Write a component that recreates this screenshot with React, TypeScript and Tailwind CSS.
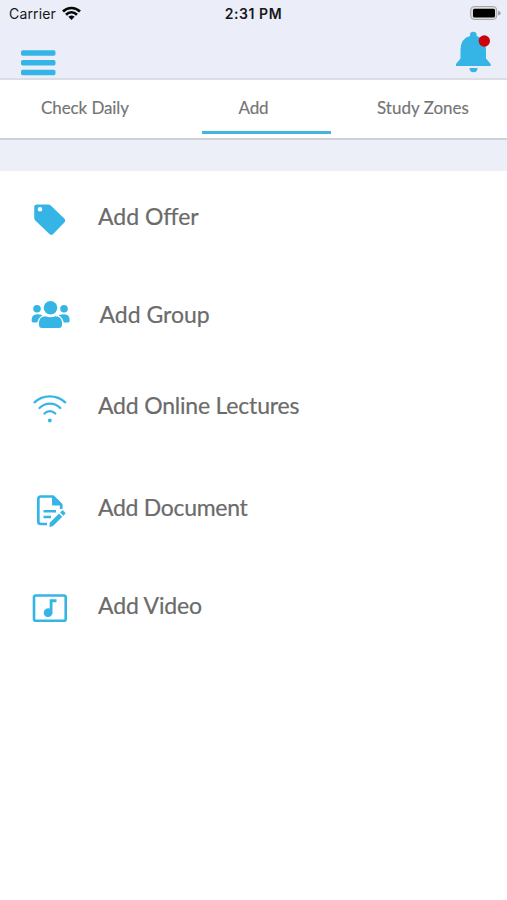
import type { ReactNode } from "react";

function Row({ icon, label, className, textClass }: { icon: ReactNode; label: string; className: string; textClass: string }) {
  return (
    <button className={`flex h-15 w-full items-center text-left text-[23px] leading-[30px] text-[#6b6b6b] ${className}`}>
      {icon}
      <span className={`whitespace-nowrap pb-[2px] [-webkit-text-stroke:0.2px_#6b6b6b] ${textClass}`}>{label}</span>
    </button>
  );
}

const iconClass = "h-15 w-[98px] shrink-0";

function TagIcon() {
  return (
    <svg className={iconClass} viewBox="0 187 98 60" fill="#35b5e5">
      <path fillRule="evenodd" d="M37 204.500H48Q49.700 204.500 51 205.700L64.300 218.500Q66.200 220.500 64.300 222.500L53.200 233.900Q51.300 235.700 49.400 233.900L35.300 220.500Q34.200 219.400 34.200 218V207.300Q34.200 204.500 37 204.500ZM40 207A2.300 2.300 0 1 0 40 211.600A2.300 2.300 0 1 0 40 207Z" />
    </svg>
  );
}

function GroupIcon() {
  return (
    <svg className={iconClass} viewBox="0 285 98 60" fill="#35b5e5">
      <circle cx="50.500" cy="307.800" r="6.800" />
      <circle cx="37" cy="308.700" r="3.800" />
      <circle cx="64" cy="308.700" r="3.800" />
      <path d="M39 325V323Q39 316.200 45.700 316.200Q50.500 318.200 55.300 316.200Q62 316.200 62 323V325Q62 328 59 328H42Q39 328 39 325Z" />
      <path d="M31.600 320.500Q31.600 314.200 37 314.200Q40.500 314.200 42.500 315.200Q38 318 37.300 322.500H33.300Q31.600 322.500 31.600 320.500ZM69.700 320.500Q69.700 314.200 64.300 314.200Q60.700 314.200 58.600 315.200Q63.100 318 63.700 322.500H68Q69.700 322.500 69.700 320.500Z" />
    </svg>
  );
}

function LectureIcon() {
  return (
    <svg className={iconClass} viewBox="0 376 98 60" fill="none" stroke="#35b5e5" strokeWidth="2.300" strokeLinecap="round">
      <path d="M34.500 402.300C43 394.400 56.500 394.400 65.200 402.300M39.500 408C45.500 402.200 54.500 402.200 60.300 408M44.500 413.500C47.500 410.400 52.200 410.400 55.300 413.500" />
      <circle cx="49.800" cy="420.500" r="1.900" fill="#35b5e5" stroke="none" />
    </svg>
  );
}

function DocumentIcon() {
  return (
    <svg className={iconClass} viewBox="0 478 98 60" fill="none" stroke="#35b5e5">
      <path d="M61.200 509V504.700L53 496.500H41Q38.300 496.500 38.300 499V521.500Q38.300 524 41 524H47" strokeWidth="2.700" />
      <path d="M52 496V504.500Q52 505.500 53 505.500H62V504L54 496Z" fill="#35b5e5" stroke="none" />
      <path d="M43.500 511.200H56M43.500 517H51" strokeWidth="2.500" />
      <path d="M50 522.800L59 513.800L62 516.800L53 525.800L49.800 526.700ZM60.300 512.500L61.800 511Q62.600 510.200 63.400 511L64.800 512.400Q65.600 513.200 64.800 514L63.300 515.500Z" fill="#35b5e5" stroke="#35b5e5" strokeWidth="0.500" />
    </svg>
  );
}

function VideoIcon() {
  return (
    <svg className={iconClass} viewBox="0 576 98 60" fill="none" stroke="#35b5e5">
      <rect x="34" y="595.500" width="31.700" height="25.300" rx="1.800" strokeWidth="2.600" />
      <path d="M49.700 599.200H56.500V602.200H52.500V612.800A4.400 4.400 0 1 1 49.700 608.600Z" fill="#35b5e5" stroke="none" />
    </svg>
  );
}

export default function App() {
  return (
    <main className="flex h-[900px] w-[507px] flex-col overflow-hidden bg-white font-['Lato',sans-serif]">
      <header className="h-20 border-b-2 border-[#dcdee5] bg-[#ebeef8]">
        <div className="grid h-7 grid-cols-3 items-center font-['Inter',sans-serif] text-[14px] leading-7 text-[#16171b]">
          <div className="flex items-center pl-[9px]">
            <span className="w-[53px] tracking-[0.15px]">Carrier</span>
            <svg className="h-5 w-[19px]" viewBox="0 0 19 20" fill="none" stroke="#080809" strokeWidth="2.700">
              <path d="M1 7.500C5.800 2.800 13 2.800 18 7.500M4 10.700C7.200 7.700 11.700 7.700 15 10.700" />
              <path d="M6.400 12.800Q9.500 10.300 12.600 12.800L9.500 15.900Z" fill="#080809" stroke="none" />
            </svg>
          </div>
          <span className="text-center text-[14px] font-semibold tracking-[0.55px]">2:31 PM</span>
          <svg className="h-7 w-[38px] justify-self-end" viewBox="469 0 38 28">
            <rect x="470.700" y="6.500" width="26" height="13" rx="3.500" fill="#dcdcdc" stroke="#a6a7aa" />
            <rect x="473" y="8.700" width="22" height="8.800" rx="1.500" fill="#000" />
            <path d="M498 10.700Q500.800 11.500 500.800 13.200Q500.800 14.800 498 15.600Z" fill="#a1a2a5" />
          </svg>
        </div>
        <div className="flex h-[50px] items-start justify-between pl-[20.500px] pr-[15px]">
          <button aria-label="Menu" className="pt-[22px]">
            <svg className="h-[26px] w-[35px]" viewBox="0 0 35 26" fill="#35b5e5">
              <rect y="0.300" width="34.500" height="5.500" rx="1.700" />
              <rect y="10" width="34.500" height="5.500" rx="1.700" />
              <rect y="19.700" width="34.500" height="5.500" rx="1.700" />
            </svg>
          </button>
          <button aria-label="Notifications">
            <svg className="h-12 w-[37px]" viewBox="455 28 37 48" fill="#35b5e5">
              <path d="M456 66V64L460.500 58.500V50Q460.500 38.500 470 36V35Q470 31.800 473.300 31.800Q476.600 31.800 476.600 35V36Q486 38.500 486 50V58.500L490.700 64V66Z" />
              <path d="M469.500 68H477.500Q477.500 72.200 473.500 72.200Q469.500 72.200 469.500 68Z" />
              <circle cx="484.300" cy="41" r="5.700" fill="#c9040b" />
            </svg>
          </button>
        </div>
      </header>
      <nav className="flex h-15 border-b-2 border-[#cfd0d4] text-[17px] leading-[24px] text-[#747474] [-webkit-text-stroke:0.15px_#747474]">
        <button className="w-[170px] pb-[2px] text-center tracking-[-0.1px]">Check Daily</button>
        <div className="flex w-[193px] justify-center">
          <button className="mb-1 w-[129px] border-b-[3px] border-[#42b6df] pt-[5px] pr-[26px] text-center tracking-[-0.2px]">Add</button>
        </div>
        <button className="w-[144px] pb-[2px] pl-[14px] text-left">Study Zones</button>
      </nav>
      <div className="h-[31px] bg-[#eceef8]" />
      <section>
        <Row icon={<TagIcon />} label="Add Offer" className="mt-4" textClass="" />
        <Row icon={<GroupIcon />} label="Add Group" className="mt-[38px]" textClass="pl-[1.5px]" />
        <Row icon={<LectureIcon />} label="Add Online Lectures" className="mt-[31px]" textClass="tracking-[-0.2px]" />
        <Row icon={<DocumentIcon />} label="Add Document" className="mt-[42px]" textClass="tracking-[-0.3px]" />
        <Row icon={<VideoIcon />} label="Add Video" className="mt-[38px]" textClass="tracking-[-0.15px]" />
      </section>
    </main>
  );
}
